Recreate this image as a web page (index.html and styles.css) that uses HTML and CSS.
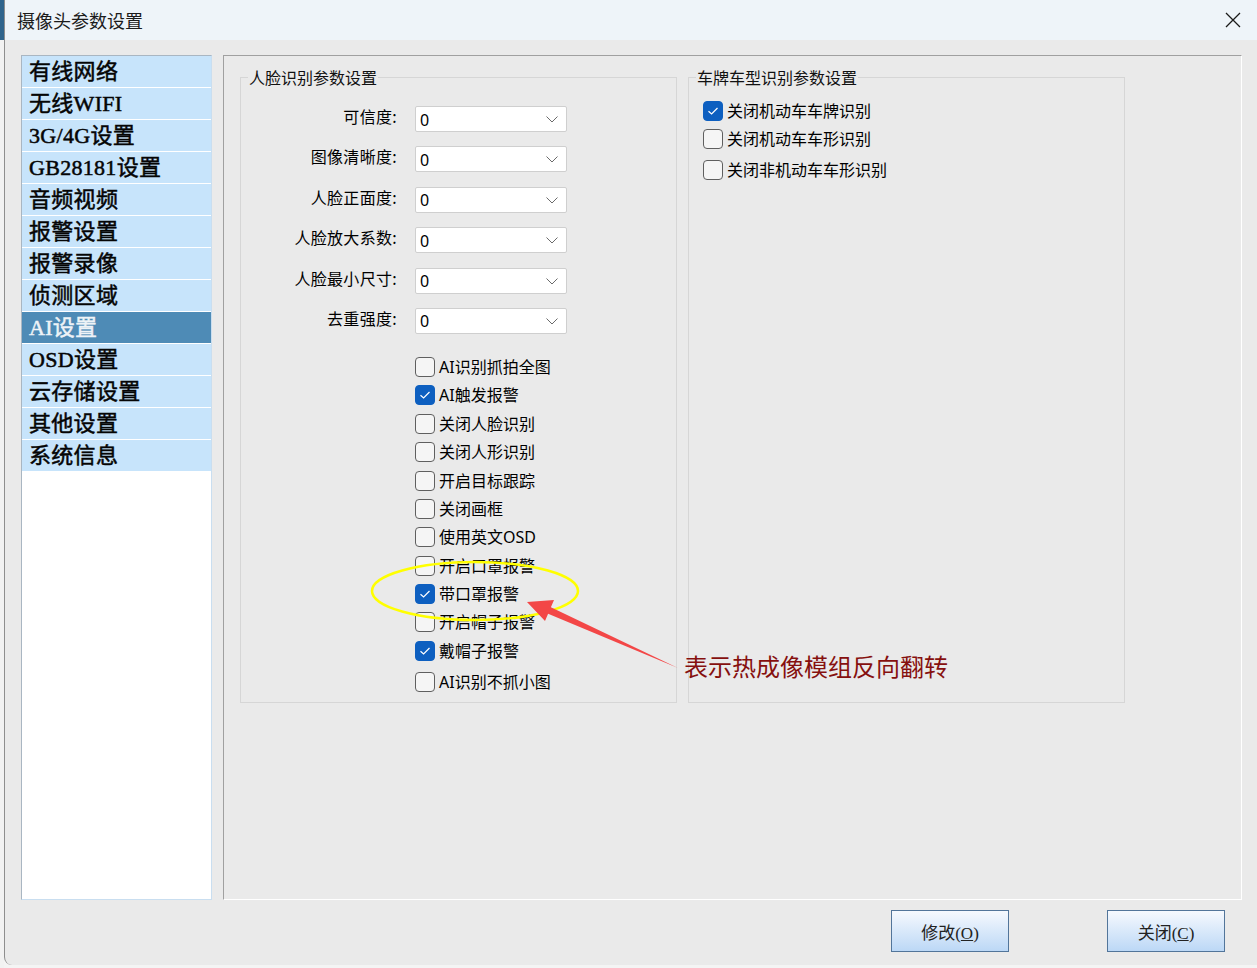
FILE: index.html
```html
<!DOCTYPE html>
<html lang="zh-CN">

<head>
  <meta charset="UTF-8" />
  <meta name="viewport" content="width=device-width, initial-scale=1.0" />
  <title>摄像头参数设置</title>
  <link rel="stylesheet" href="styles.css">
</head>

<body>
  <div class="screen">
    <div class="desk-edge"></div>

    <div class="window">
      <div class="titlebar">
        <span class="title">摄像头参数设置</span>
        <svg class="close" width="16" height="16" viewBox="0 0 16 16">
          <path d="M1 1 L15 15 M15 1 L1 15" stroke="#1a1a1a" stroke-width="1.3" fill="none" />
        </svg>
      </div>

      <div class="content">
        <div class="main-row">
          <ul class="nav">
            <li>有线网络</li>
            <li>无线WIFI</li>
            <li>3G/4G设置</li>
            <li>GB28181设置</li>
            <li>音频视频</li>
            <li>报警设置</li>
            <li>报警录像</li>
            <li>侦测区域</li>
            <li class="active">AI设置</li>
            <li>OSD设置</li>
            <li>云存储设置</li>
            <li>其他设置</li>
            <li>系统信息</li>
          </ul>

          <div class="panel">
            <fieldset class="group group-face">
              <legend>人脸识别参数设置</legend>
              <div class="form">
                <label>可信度:</label>
                <div class="select"><span>0</span><svg width="12" height="7" viewBox="0 0 12 7"><path d="M0.5 0.5 L6 6 L11.5 0.5" stroke="#6a6a6a" fill="none" /></svg></div>
                <label>图像清晰度:</label>
                <div class="select"><span>0</span><svg width="12" height="7" viewBox="0 0 12 7"><path d="M0.5 0.5 L6 6 L11.5 0.5" stroke="#6a6a6a" fill="none" /></svg></div>
                <label>人脸正面度:</label>
                <div class="select"><span>0</span><svg width="12" height="7" viewBox="0 0 12 7"><path d="M0.5 0.5 L6 6 L11.5 0.5" stroke="#6a6a6a" fill="none" /></svg></div>
                <label>人脸放大系数:</label>
                <div class="select"><span>0</span><svg width="12" height="7" viewBox="0 0 12 7"><path d="M0.5 0.5 L6 6 L11.5 0.5" stroke="#6a6a6a" fill="none" /></svg></div>
                <label>人脸最小尺寸:</label>
                <div class="select"><span>0</span><svg width="12" height="7" viewBox="0 0 12 7"><path d="M0.5 0.5 L6 6 L11.5 0.5" stroke="#6a6a6a" fill="none" /></svg></div>
                <label>去重强度:</label>
                <div class="select"><span>0</span><svg width="12" height="7" viewBox="0 0 12 7"><path d="M0.5 0.5 L6 6 L11.5 0.5" stroke="#6a6a6a" fill="none" /></svg></div>
              </div>

              <div class="checks face-checks">
                <div class="check"><span class="box"></span>AI识别抓拍全图</div>
                <div class="check"><span class="box on"><svg width="12" height="10" viewBox="0 0 12 10"><path d="M1.5 5.2 L4.6 8 L10.5 2" stroke="#fff" stroke-width="1.2" fill="none" /></svg></span>AI触发报警</div>
                <div class="check"><span class="box"></span>关闭人脸识别</div>
                <div class="check"><span class="box"></span>关闭人形识别</div>
                <div class="check"><span class="box"></span>开启目标跟踪</div>
                <div class="check"><span class="box"></span>关闭画框</div>
                <div class="check"><span class="box"></span>使用英文OSD</div>
                <div class="check"><span class="box"></span>开启口罩报警</div>
                <div class="check"><span class="box on"><svg width="12" height="10" viewBox="0 0 12 10"><path d="M1.5 5.2 L4.6 8 L10.5 2" stroke="#fff" stroke-width="1.2" fill="none" /></svg></span>带口罩报警</div>
                <div class="check"><span class="box"></span>开启帽子报警</div>
                <div class="check"><span class="box on"><svg width="12" height="10" viewBox="0 0 12 10"><path d="M1.5 5.2 L4.6 8 L10.5 2" stroke="#fff" stroke-width="1.2" fill="none" /></svg></span>戴帽子报警</div>
                <div class="check last"><span class="box"></span>AI识别不抓小图</div>
              </div>
            </fieldset>

            <fieldset class="group group-car">
              <legend>车牌车型识别参数设置</legend>
              <div class="checks car-checks">
                <div class="check"><span class="box on"><svg width="12" height="10" viewBox="0 0 12 10"><path d="M1.5 5.2 L4.6 8 L10.5 2" stroke="#fff" stroke-width="1.2" fill="none" /></svg></span>关闭机动车车牌识别</div>
                <div class="check"><span class="box"></span>关闭机动车车形识别</div>
                <div class="check last"><span class="box"></span>关闭非机动车车形识别</div>
              </div>
            </fieldset>
          </div>
        </div>

        <div class="footer">
          <button class="btn">修改(<u>O</u>)</button>
          <button class="btn">关闭(<u>C</u>)</button>
        </div>
      </div>
    </div>

    <!-- 标注 -->
    <svg class="annot" width="1257" height="968" viewBox="0 0 1257 968">
      <ellipse cx="475" cy="591" rx="103" ry="29" fill="none" stroke="#ffff00" stroke-width="2.5" />
      <polygon points="678,668 550.9,607.3 554,600 527,602 545,621 548.1,613.7" fill="#f34747" />
    </svg>
    <div class="note">表示热成像模组反向翻转</div>
  </div>
</body>

</html>
```

FILE: styles.css
```css
* {
  box-sizing: border-box;
}

body {
  margin: 0;
  width: 1257px;
  height: 968px;
  overflow: hidden;
  background: #f4f4f4;
  font-family: "Noto Sans", "Noto Sans CJK SC", sans-serif;
  color: #000;
}

.screen {
  position: relative;
  display: flex;
  height: 968px;
}

.desk-edge {
  width: 4px;
  background: linear-gradient(#2f648c 0, #2f648c 40px, #f2f2f2 40px);
}

.window {
  flex: 1;
  display: flex;
  flex-direction: column;
  background: #eaeaea;
  border-left: 1px solid #8e8e8e;
  border-bottom-left-radius: 8px;
  margin-bottom: 3px;
}

.titlebar {
  height: 40px;
  display: flex;
  align-items: center;
  justify-content: space-between;
  padding: 0 16px 0 12px;
  background: #eef4f9;
}

.title {
  font-family: "Noto Sans CJK SC", sans-serif;
  font-size: 18px;
  color: #1b1b1b;
}

.content {
  flex: 1;
  display: flex;
  flex-direction: column;
  padding: 15px 15px 0 16px;
}

.main-row {
  display: flex;
  gap: 11px;
  height: 845px;
}

/* 左侧菜单 */
.nav {
  width: 191px;
  margin: 0;
  padding: 0;
  list-style: none;
  background: #fff;
  border: 1px solid;
  border-color: #a9b6c2 #c9def0 #c9def0 #a9b6c2;
}

.nav li {
  height: 32px;
  line-height: 31px;
  padding-left: 7px;
  border-bottom: 1px solid #fff;
  background: #c7e4fb;
  font-family: "Liberation Serif", "Noto Sans CJK SC", serif;
  font-size: 22px;
  letter-spacing: 0.3px;
  -webkit-text-stroke: 0.5px currentColor;
  color: #050505;
}

.nav li.active {
  background: #4e8bb6;
  color: #eef3f7;
}

/* 右侧面板 */
.panel {
  flex: 1;
  display: flex;
  align-items: flex-start;
  gap: 11px;
  padding: 11px 0 0 16px;
  border: 1px solid;
  border-color: #a0a0a0 #fff #fff #a0a0a0;
}

.group {
  width: 437px;
  height: 636px;
  margin: 0;
  padding: 0;
  min-inline-size: 0;
  border: 1px solid #d6d6d6;
}

.group legend {
  margin-left: 7px;
  padding: 0 1px;
  font-family: "Noto Sans CJK SC", sans-serif;
  font-size: 16px;
  line-height: 20px;
  color: #111;
}

.form {
  display: grid;
  grid-template-columns: 156px 152px;
  grid-auto-rows: 26px;
  column-gap: 18px;
  row-gap: 14.4px;
  margin-top: 19px;
}

.form label {
  text-align: right;
  align-self: center;
  margin-bottom: 6px;
  font-family: "Noto Sans CJK SC", sans-serif;
  font-size: 16px;
  line-height: 20px;
  letter-spacing: 0.3px;
}

.select {
  display: flex;
  align-items: center;
  justify-content: space-between;
  padding: 1px 8px 0 4px;
  background: #fff;
  border: 1px solid #cfcfcf;
  border-radius: 2px;
  font-size: 16px;
}

.checks {
  display: flex;
  flex-direction: column;
}

.face-checks {
  margin-top: 18.8px;
  padding-left: 174px;
}

.car-checks {
  margin-top: 10px;
  padding-left: 14px;
}

.check {
  display: flex;
  align-items: center;
  gap: 4px;
  height: 28.4px;
  font-size: 16px;
  line-height: 20px;
}

.car-checks .check {
  height: 28px;
}

.check.last {
  margin-top: 2.6px;
}

.box {
  width: 20px;
  height: 20px;
  flex: none;
  display: flex;
  align-items: center;
  justify-content: center;
  background: #f5f5f5;
  border: 1px solid #5f5f5f;
  border-radius: 4px;
}

.box.on {
  background: #0d5fc0;
  border-color: #0d5fc0;
}

/* 底部按钮 */
.footer {
  display: flex;
  justify-content: flex-end;
  gap: 98px;
  margin-top: 10px;
  padding-right: 17px;
}

.btn {
  width: 118px;
  height: 42px;
  padding: 0;
  background: linear-gradient(#f6f9fe, #bcd8f6);
  border: 1px solid #52759a;
  font-family: "Liberation Serif", "Noto Sans CJK SC", serif;
  font-size: 17px;
  color: #222;
}

/* 标注 */
.annot {
  position: absolute;
  left: 0;
  top: 0;
  pointer-events: none;
}

.note {
  position: absolute;
  left: 684px;
  top: 651px;
  font-family: "Noto Sans CJK SC", sans-serif;
  font-size: 24px;
  line-height: 30px;
  color: #86100f;
}
```
